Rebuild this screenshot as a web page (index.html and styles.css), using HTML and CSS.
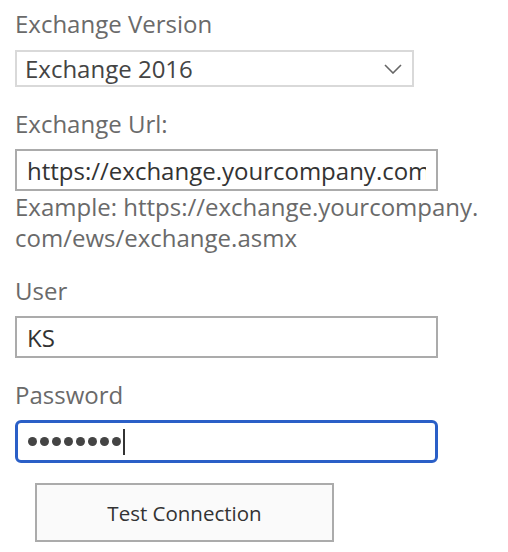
FILE: index.html
```html
<!DOCTYPE html>
<html>
<head>
<meta charset="utf-8">
<link rel="stylesheet" href="styles.css">
</head>
<body>
<form class="form">
  <div class="field">
    <label class="label">Exchange Version</label>
    <div class="select">
      <span class="select-text">Exchange 2016</span>
      <svg class="chevron" width="18" height="10" viewBox="0 0 18 10"><path d="M1 1 L9 9 L17 1" fill="none" stroke="#666" stroke-width="1.6"/></svg>
    </div>
  </div>
  <div class="field field-url">
    <label class="label">Exchange Url:</label>
    <input class="input" type="text" value="https://exchange.yourcompany.com/ews/exchange.asmx" readonly>
    <div class="hint">Example: https://exchange.yourcompany.<br>com/ews/exchange.asmx</div>
  </div>
  <div class="field">
    <label class="label">User</label>
    <input class="input" type="text" value="KS" readonly>
  </div>
  <div class="field field-last">
    <label class="label">Password</label>
    <div class="input input-focus">
      <span class="dots" aria-label="password"><i></i><i></i><i></i><i></i><i></i><i></i><i></i><i></i></span><span class="caret"></span>
    </div>
  </div>
  <div class="actions">
    <button type="button" class="button">Test Connection</button>
  </div>
</form>
</body>
</html>
```
FILE: styles.css
```css
html, body {
  margin: 0;
  padding: 0;
  background: #fff;
}
body {
  font-family: "Open Sans", "Noto Sans", sans-serif;
  color: #333;
}
.form {
  display: flex;
  flex-direction: column;
  padding: 10px 0 0 15px;
}
.field {
  display: flex;
  flex-direction: column;
  margin-bottom: 23px;
}
.field-url {
  margin-bottom: 24px;
}
.field-last {
  margin-bottom: 20px;
}
.label {
  font-size: 24px;
  line-height: 28px;
  color: #6a6a6a;
  margin-bottom: 11px;
}
.select {
  box-sizing: border-box;
  width: 399px;
  height: 37px;
  border: 2px solid #d9d9d9;
  display: flex;
  align-items: center;
  justify-content: space-between;
  padding: 0 8px 0 8px;
  font-size: 24px;
  color: #444;
  margin-top: 1px;
}
.chevron {
  margin-right: 2px;
}
.input {
  box-sizing: border-box;
  width: 423px;
  height: 42px;
  border: 2px solid #ababab;
  border-radius: 0;
  padding: 0 10px;
  font-family: inherit;
  font-size: 24px;
  color: #333;
  background: #fff;
  outline: none;
  margin: 0;
}
.hint {
  font-size: 24px;
  line-height: 31px;
  color: #6a6a6a;
  margin-top: 0;
}
.input-focus {
  display: flex;
  align-items: center;
  border: 3px solid #2a5fc7;
  border-radius: 6px;
  padding: 0 10px 0 10px;
  height: 43px;
}
.dots {
  display: flex;
  gap: 3px;
}
.dots i {
  display: block;
  width: 9px;
  height: 9px;
  border-radius: 50%;
  background: #444;
}
.caret {
  width: 2px;
  height: 26px;
  background: #333;
  margin-left: 2px;
}
.actions {
  display: flex;
  padding: 0 0 0 20px;
}
.button {
  box-sizing: border-box;
  width: 299px;
  height: 59px;
  border: 2px solid #ababab;
  background: #fafafa;
  font-family: inherit;
  font-size: 20.5px;
  color: #333;
  cursor: pointer;
}
```
